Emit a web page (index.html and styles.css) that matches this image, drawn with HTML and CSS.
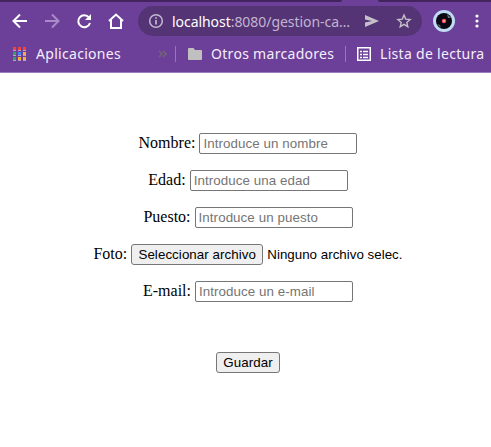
FILE: index.html
```html
<!DOCTYPE html>
<html lang="es">
<head>
<meta charset="utf-8">
<title>Gestión</title>
<link rel="stylesheet" href="styles.css">
</head>
<body>
<header class="chrome">
  <div class="tabs"><span class="tab-left"></span><span class="tab-right"></span></div>
  <div class="toolbar">
    <svg class="nav" width="126" height="30" viewBox="0 0 126 30" fill="none" stroke="#fff" stroke-width="2">
      <path d="M27 15H14M20 8.5L13.5 15L20 21.5"/>
      <path d="M45 15H58M52 8.5L58.500 15L52 21.500" stroke="#a98bc8"/>
      <path d="M89 11.500A6 6 0 1 0 90 17"/>
      <path d="M91 8V14H85Z" fill="#fff" stroke="none"/>
      <path d="M109 15L116 8.500L123 15M111 14V22H121V14"/>
    </svg>
    <div class="address">
      <svg width="16" height="16" viewBox="0 0 16 16" fill="none" stroke="#c3b8cf" stroke-width="1.500"><circle cx="8" cy="8" r="6.300"/><path d="M8 7V11.500M8 4.300V5.800" stroke-width="1.700"/></svg>
      <span class="url"><b>localhost</b>:8080/gestion-ca…</span>
      <svg class="send" width="16" height="14" viewBox="0 0 16 14" fill="#c5c0c9"><path d="M1 1L15 7L1 13V8.500L8 7L1 5.500Z"/></svg>
      <svg class="star" width="16" height="16" viewBox="0 0 16 16" fill="none" stroke="#c5c0c9" stroke-width="1.400"><path d="M8 2L9.700 6.100L14.100 6.500L10.800 9.400L11.800 13.700L8 11.400L4.200 13.700L5.200 9.400L1.900 6.500L6.300 6.100Z"/></svg>
    </div>
    <svg class="avatar" width="22" height="22" viewBox="0 0 22 22"><circle cx="11" cy="11" r="11" fill="#c0dcf4"/><circle cx="11" cy="11" r="8" fill="#090813"/><path d="M14 4L18 8L15 8ZM4 14L8 18L7 15Z" fill="#68717c"/><circle cx="11" cy="11" r="2.300" fill="#ed4664"/><circle cx="11" cy="11" r="1" fill="#ffd178"/></svg>
    <svg class="more" width="4" height="14" viewBox="0 0 4 14" fill="#fff"><circle cx="2" cy="2" r="1.600"/><circle cx="2" cy="7" r="1.600"/><circle cx="2" cy="12" r="1.600"/></svg>
  </div>
  <div class="bookmarks">
    <svg class="apps" width="13" height="14" viewBox="0 0 13 14">
      <path d="M0 0h3v3H0zM5 0h3v3H5zM10 0h3v3h-3z" fill="#f0443a"/>
      <path d="M0 5h3v3H0zM0 10h3v3H0z" fill="#34a065"/><path d="M5 5h3v3H5z" fill="#4285f4"/><path d="M10 5h3v3h-3zM5 10h3v3H5zM10 10h3v3h-3z" fill="#f4b035"/>
      <path d="M0 3h3v1H0zM5 3h3v1H5zM10 3h3v1h-3zM0 8h3v1H0zM5 8h3v1H5zM10 8h3v1h-3zM0 13h3v1H0zM5 13h3v1H5zM10 13h3v1h-3z" fill="#b6a0ca"/>
    </svg>
    <span class="apps-label">Aplicaciones</span>
    <svg class="overflow" width="9" height="8" viewBox="0 0 9 8" fill="none" stroke="#706575" stroke-width="1.600"><path d="M1 1L4 4L1 7M5 1L8 4L5 7"/></svg>
    <i class="divider"></i>
    <svg class="folder" width="14" height="12" viewBox="0 0 14 12" fill="#c1c0c1"><path d="M1 0H5.500L7 2H13Q14 2 14 3V11Q14 12 13 12H1Q0 12 0 11V1Q0 0 1 0Z"/></svg>
    <span class="other-label">Otros marcadores</span>
    <i class="divider second"></i>
    <svg class="list" width="14" height="14" viewBox="0 0 14 14" fill="none" stroke="#fff"><rect x=".75" y=".75" width="12.500" height="12.500" stroke-width="1.500"/><path d="M3 4.500H5M6 4.500H11M3 7.500H5M6 7.500H11M3 10.500H5M6 10.500H11" stroke-width="1.500"/></svg>
    <span class="reading-label">Lista de lectura</span>
  </div>
</header>
<form>
  <p><label for="nombre">Nombre:</label> <input id="nombre" placeholder="Introduce un nombre"></p>
  <p><label for="edad">Edad:</label> <input id="edad" placeholder="Introduce una edad"></p>
  <p><label for="puesto">Puesto:</label> <input id="puesto" placeholder="Introduce un puesto"></p>
  <p>Foto: <button type="button" class="file">Seleccionar archivo</button><span class="filename">Ninguno archivo selec.</span></p>
  <p><label for="email">E-mail:</label> <input id="email" placeholder="Introduce un e-mail"></p>
  <button type="button" class="save">Guardar</button>
</form>
</body>
</html>
```
FILE: styles.css
```css
* { box-sizing: border-box; }
body { margin: 0; background: #fff; overflow: hidden; font: 16px "Liberation Serif", serif; color: #000; }
svg { display: block; flex: none; }
.chrome { height: 73px; background: #6c4099; border-bottom: 1px solid #9a7bb9; font-family: "Noto Sans", sans-serif; font-size: 14px; color: #f5eefb; }
.tabs { height: 2px; display: flex; justify-content: space-between; }
.tab-left { width: 342px; background: #43245f; border-radius: 0 0 3px 0; }
.tab-right { width: 113px; background: #43245f; border-radius: 0 0 0 3px; }
.toolbar { height: 38px; display: flex; align-items: center; }
.nav { margin-right: 12px; }
.address { width: 284px; height: 30px; border-radius: 15px; background: #543475; display: flex; align-items: center; padding-left: 10px; }
.url { width: 184px; margin-left: 8px; white-space: nowrap; color: #c3b3d2; letter-spacing: -.05px; }
.url b { font-weight: 400; color: #fff; }
.send { margin-left: 8px; }
.star { margin-left: 16px; }
.avatar { margin-left: 11px; }
.more { margin-left: 20px; }
.bookmarks { height: 28px; display: flex; align-items: center; padding-left: 13px; white-space: nowrap; letter-spacing: .3px; }
.apps-label, .other-label, .reading-label { flex: none; position: relative; top: -1px; }
.apps-label { width: 121px; margin-left: 10px; }
.overflow { margin-left: 1px; }
.divider { flex: none; width: 1px; height: 16px; margin-left: 8px; background: #9878b3; }
.folder { margin-left: 12px; }
.other-label { width: 134px; margin-left: 9px; }
.divider.second { margin-left: 0; }
.list { margin-left: 11px; }
.reading-label { margin-left: 9px; }
form { padding: 59px 0 0 5px; text-align: center; }
p { height: 21px; margin: 0 0 16px; line-height: 21px; white-space: nowrap; }
input { width: 158px; height: 21px; padding: 1px 3px; border: 1px solid #767676; border-radius: 2px; font: 13.333px "Liberation Sans", sans-serif; letter-spacing: .08px; }
input::placeholder { color: #757575; }
button { height: 21px; padding: 1px 6px; border: 1px solid #767676; border-radius: 3px; background: #efefef; color: #000; font: 13.333px "Liberation Sans", sans-serif; letter-spacing: .07px; }
.file { width: 132px; }
.filename { margin-left: 4px; font: 13.333px "Liberation Sans", sans-serif; letter-spacing: .02px; }
.save { display: block; width: 64px; margin: 51px auto 0; }
```
